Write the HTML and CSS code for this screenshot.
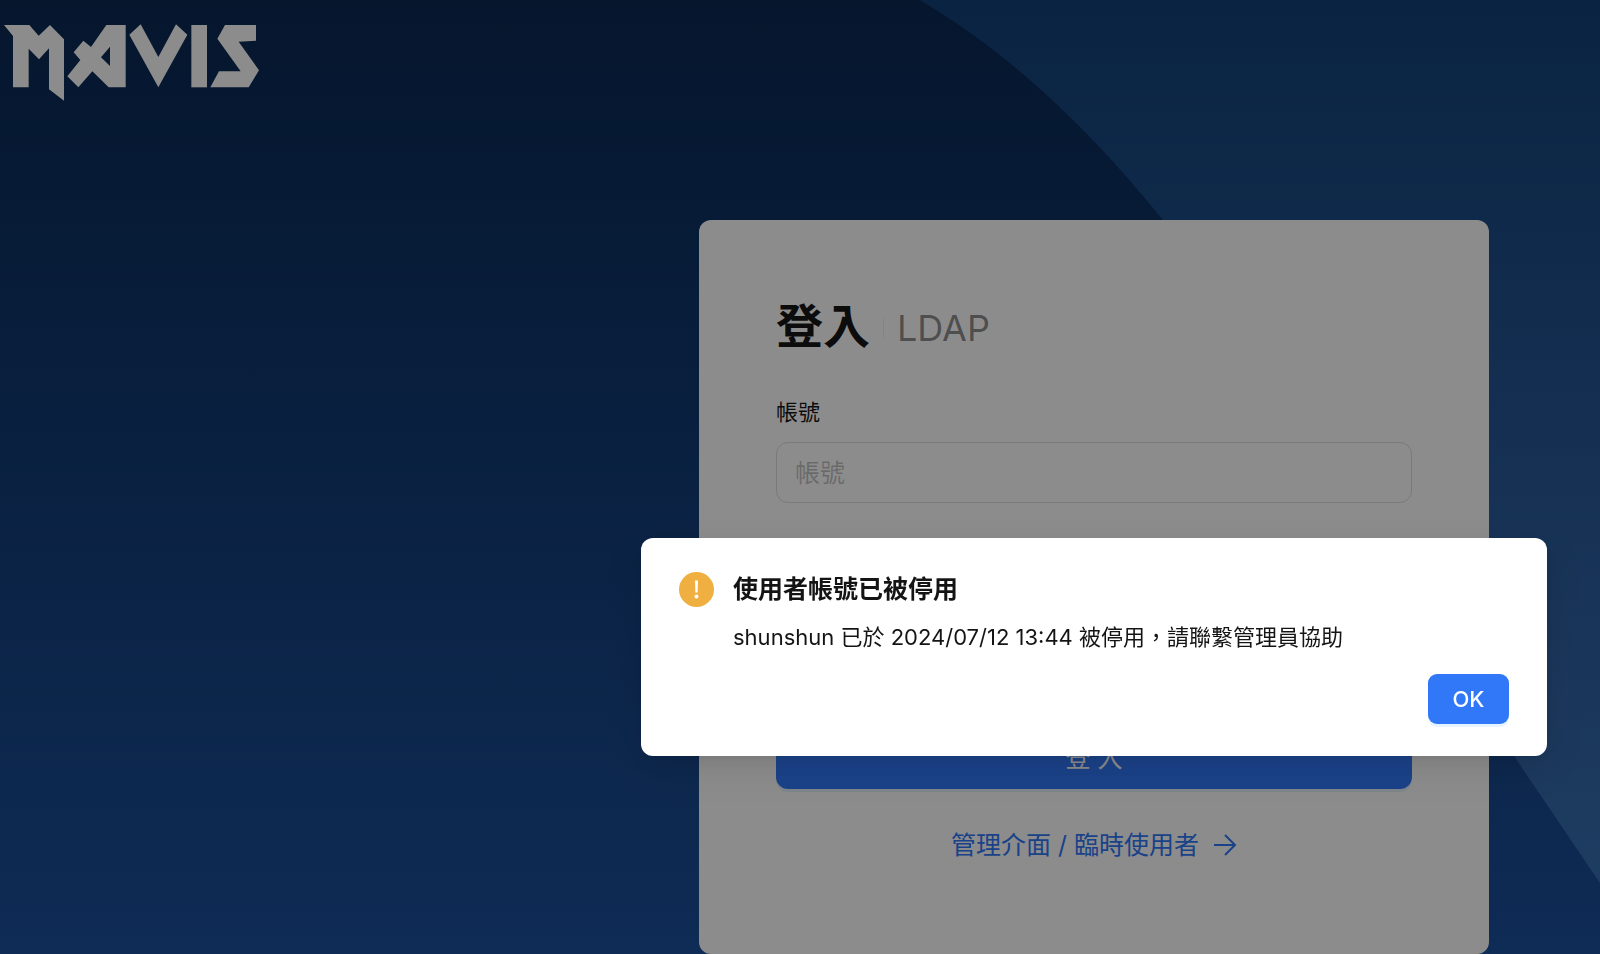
FILE: index.html
```html
<!DOCTYPE html>
<html lang="zh-Hant">
<head>
    <meta charset="UTF-8">
    <meta name="viewport" content="width=device-width, initial-scale=1.0">
    <title>MAVIS 登入</title>
    <link rel="stylesheet" href="styles.css">
</head>
<body>
    <svg class="backdrop" viewBox="0 0 1600 954" preserveAspectRatio="none" aria-hidden="true">
        <defs>
            <linearGradient id="wave" x1="0" y1="0" x2="0" y2="1">
                <stop offset="0" stop-color="#14417a"/>
                <stop offset="1" stop-color="#386eb2"/>
            </linearGradient>
        </defs>
        <path fill="url(#wave)" d="M920 0C1015 57 1090 130 1163 220C1260 355 1390 573 1514 756L1600 883V0Z"/>
    </svg>

    <header class="header">
        <a class="logo" href="#" aria-label="MAVIS">
            <svg width="280" height="120" viewBox="0 0 840 360" fill="#fff">
                <path d="M12 75H88L116 107L150 75L192 118V302L147 268V145L117 178L86 146V262H39V108Z"/>
                <path fill-rule="evenodd" d="M319 75H377V262H326L277 214L235 262L202 229L241 180L221 157L250 122L273 141ZM330 140L303 172L330 198Z"/>
                <path d="M422 73L475 171L528 73L562 104L475 262L388 104Z"/>
                <path d="M574 75H621V262H574Z"/>
                <path d="M675 75H768V122L716 125L777 211L746 262H631L657 214H722L652 116Z"/>
            </svg>
        </a>
    </header>

    <main class="main">
        <form class="card" id="loginForm">
            <div class="card-title">
                <h1>登入</h1>
                <span class="divider"></span>
                <span class="card-type">LDAP</span>
            </div>
            <div class="form-group">
                <label for="account">帳號</label>
                <input type="text" id="account" placeholder="帳號">
            </div>
            <div class="form-group">
                <label for="password">密碼</label>
                <input type="password" id="password" placeholder="密碼">
            </div>
            <button class="btn btn-login" type="submit">登 入</button>
            <a class="switch-link" href="#">
                <span>管理介面 / 臨時使用者</span>
                <svg width="24" height="24" viewBox="0 0 24 24" fill="none" stroke="currentColor" stroke-width="2">
                    <path d="M1 12H22M12 2L22 12L12 22"/>
                </svg>
            </a>
        </form>
    </main>

    <div class="mask"></div>
    <div class="modal" role="alertdialog" aria-modal="true" aria-labelledby="modalTitle" aria-describedby="modalText">
        <div class="modal-body">
            <svg class="modal-icon" width="35" height="35" viewBox="0 0 35 35">
                <circle cx="17.5" cy="17.5" r="17.5" fill="#efaf41"/>
                <path d="M16 8.5H19L18.6 20.5H16.4Z" fill="#fff"/>
                <circle cx="17.5" cy="24.5" r="2" fill="#fff"/>
            </svg>
            <div class="modal-content">
                <h2 id="modalTitle">使用者帳號已被停用</h2>
                <p id="modalText">shunshun 已於 2024/07/12 13:44 被停用，請聯繫管理員協助</p>
            </div>
        </div>
        <div class="modal-footer">
            <button class="btn btn-ok" type="button">OK</button>
        </div>
    </div>
</body>
</html>
```

FILE: styles.css
```css
* {
    box-sizing: border-box;
}
body {
    margin: 0;
    min-height: 100vh;
    font-family: Inter, "Noto Sans CJK TC", sans-serif;
    font-size: 22px;
    line-height: 36px;
    color: rgba(0, 0, 0, 0.92);
    background: linear-gradient(#0a2953, #1b509c) fixed;
}
h1, h2, p {
    margin: 0;
}
input, button {
    font-family: inherit;
}
.backdrop {
    position: fixed;
    inset: 0;
    z-index: -1;
    width: 100%;
    height: 100%;
}
.header {
    display: flex;
}
.logo {
    display: flex;
}
.main {
    display: flex;
    justify-content: flex-end;
    padding: 100px 111px 0 0;
}
.card {
    display: flex;
    flex-direction: column;
    gap: 38px;
    width: 100%;
    max-width: 790px;
    padding: 80px 77px 91px;
    background: #fff;
    border-radius: 12px;
}
.card-title {
    display: flex;
    align-items: center;
    height: 56px;
}
.card-title h1 {
    font-size: 47px;
    line-height: 52px;
    padding-bottom: 4px;
    font-weight: 700;
}
.divider {
    width: 1px;
    height: 20px;
    margin: 0 13px;
    background: rgba(0, 0, 0, 0.06);
}
.card-type {
    font-size: 36px;
    color: rgba(0, 0, 0, 0.45);
}
.form-group {
    display: flex;
    flex-direction: column;
    gap: 12px;
}
.form-group input {
    width: 100%;
    height: 61px;
    padding: 0 18px;
    font-size: 25px;
    color: inherit;
    background: #fff;
    border: 1px solid #dedede;
    border-radius: 12px;
}
.form-group input::placeholder {
    color: rgba(0, 0, 0, 0.25);
}
.btn {
    color: #fff;
    background: #3178f9;
    border: none;
    cursor: pointer;
    box-shadow: 0 3px 0 rgba(5, 145, 255, 0.1);
}
.btn:hover {
    background: #4f8dff;
}
.btn-login {
    height: 61px;
    margin-top: 40px;
    padding-bottom: 6px;
    font-size: 25px;
    border-radius: 12px;
}
.switch-link {
    display: flex;
    justify-content: center;
    align-items: center;
    gap: 14px;
    font-size: 25px;
    color: #3178f9;
    text-decoration: none;
}
.mask {
    position: fixed;
    inset: 0;
    background: rgba(0, 0, 0, 0.45);
}
.modal {
    position: fixed;
    top: 538px;
    right: 53px;
    width: 906px;
    max-width: 100%;
    padding: 32px 38px;
    background: #fff;
    border-radius: 12px;
    box-shadow: 0 9px 24px rgba(0, 0, 0, 0.08), 0 4px 9px -6px rgba(0, 0, 0, 0.12), 0 14px 42px 12px rgba(0, 0, 0, 0.05);
}
.modal-body {
    display: flex;
    gap: 19px;
}
.modal-icon {
    flex: none;
    margin-top: 2px;
}
.modal-content {
    display: flex;
    flex-direction: column;
    gap: 11px;
}
.modal-content h2 {
    font-size: 25px;
    font-weight: 600;
    line-height: 38px;
}
.modal-footer {
    display: flex;
    justify-content: flex-end;
    margin-top: 19px;
}
.btn-ok {
    width: 81px;
    height: 50px;
    font-size: 22px;
    font-weight: 500;
    border-radius: 9px;
}
```
